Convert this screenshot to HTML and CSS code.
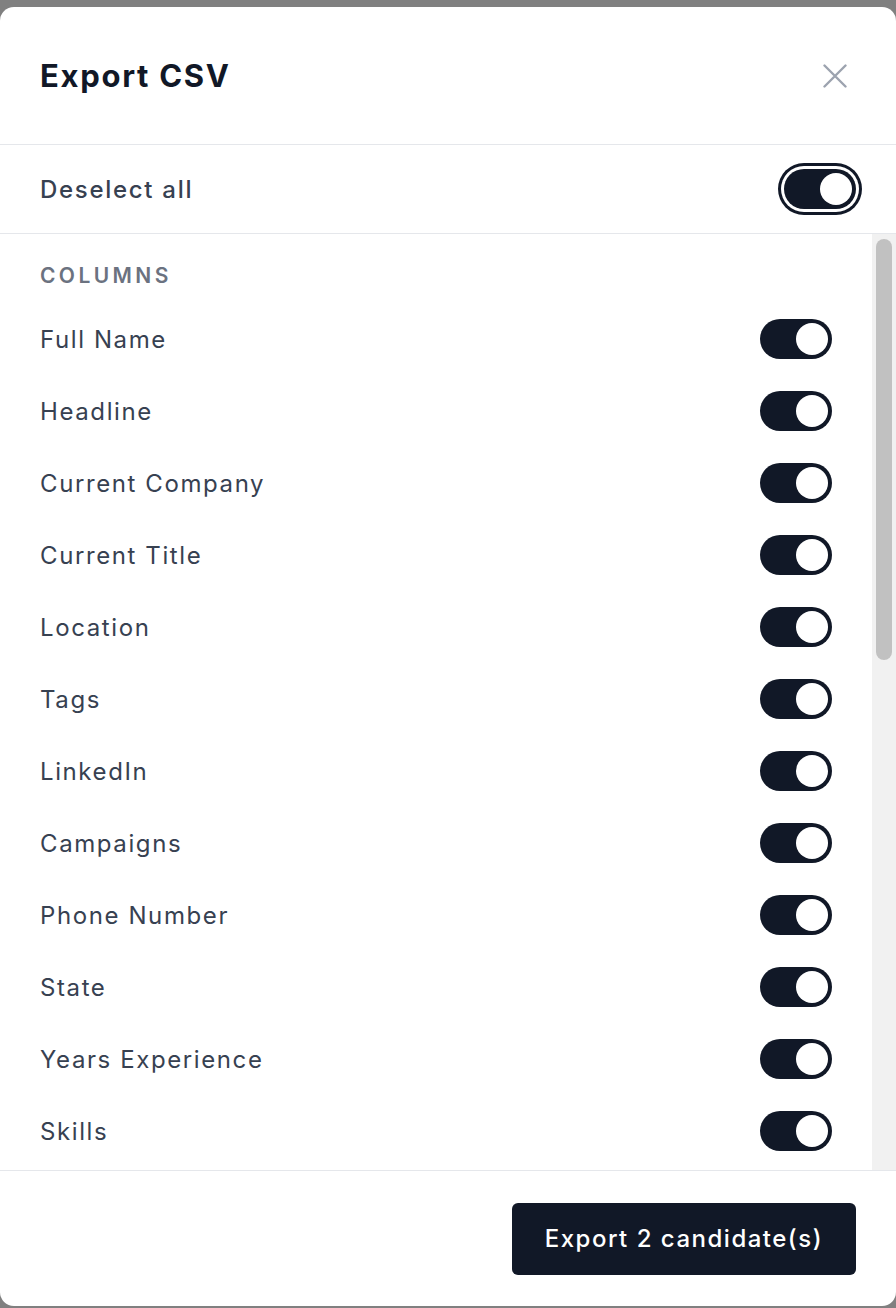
FILE: index.html
```html
<html>
<head>
    <meta charset="UTF-8">
    <title>Export CSV</title>
    <link rel="stylesheet" href="styles.css">
</head>
<body>
    <div class="modal">
        <div class="cabecera">
            <h1 class="titulo">Export CSV</h1>
            <button class="cerrar" type="button">
                <svg width="24" height="24" viewBox="0 0 24 24" fill="none" stroke="#9ca3af" stroke-width="2.4" stroke-linecap="round">
                    <path d="M1.5 1.5 L22.5 22.5 M22.5 1.5 L1.5 22.5"/>
                </svg>
            </button>
        </div>

        <div class="fila-todos">
            <span class="texto-todos">Deselect all</span>
            <span class="interruptor activo foco"><span class="bolita"></span></span>
        </div>

        <div class="zona">
            <div class="cuerpo">
                <p class="seccion">COLUMNS</p>
                <div class="fila"><span>Full Name</span><span class="interruptor activo"><span class="bolita"></span></span></div>
                <div class="fila"><span>Headline</span><span class="interruptor activo"><span class="bolita"></span></span></div>
                <div class="fila"><span>Current Company</span><span class="interruptor activo"><span class="bolita"></span></span></div>
                <div class="fila"><span>Current Title</span><span class="interruptor activo"><span class="bolita"></span></span></div>
                <div class="fila"><span>Location</span><span class="interruptor activo"><span class="bolita"></span></span></div>
                <div class="fila"><span>Tags</span><span class="interruptor activo"><span class="bolita"></span></span></div>
                <div class="fila"><span>LinkedIn</span><span class="interruptor activo"><span class="bolita"></span></span></div>
                <div class="fila"><span>Campaigns</span><span class="interruptor activo"><span class="bolita"></span></span></div>
                <div class="fila"><span>Phone Number</span><span class="interruptor activo"><span class="bolita"></span></span></div>
                <div class="fila"><span>State</span><span class="interruptor activo"><span class="bolita"></span></span></div>
                <div class="fila"><span>Years Experience</span><span class="interruptor activo"><span class="bolita"></span></span></div>
                <div class="fila"><span>Skills</span><span class="interruptor activo"><span class="bolita"></span></span></div>
            </div>
            <div class="barra">
                <div class="pulgar"></div>
            </div>
        </div>

        <div class="pie">
            <button class="exportar" type="button">Export 2 candidate(s)</button>
        </div>
    </div>
</body>
</html>
```

FILE: styles.css
```css
body {
    margin: 0;
    background-color: #808080;
    font-family: Inter, "Liberation Sans", sans-serif;
}

.modal {
    margin-top: 7px;
    height: 1299px;
    background-color: white;
    border-radius: 14px;
    display: flex;
    flex-direction: column;
    overflow: hidden;
}

.cabecera {
    height: 137px;
    flex-shrink: 0;
    display: flex;
    align-items: center;
    justify-content: space-between;
    padding: 0 49px 0 40px;
    border-bottom: 1px solid #e5e7eb;
}

.titulo {
    margin: 0;
    font-size: 31px;
    font-weight: 700;
    color: #111827;
    letter-spacing: 1.7px;
}

.cerrar {
    border: none;
    background: none;
    padding: 0;
    display: flex;
}

.fila-todos {
    height: 88px;
    flex-shrink: 0;
    display: flex;
    align-items: center;
    justify-content: space-between;
    padding: 0 40px;
    border-bottom: 1px solid #e5e7eb;
}

.texto-todos {
    font-size: 24px;
    font-weight: 500;
    color: #374151;
    letter-spacing: 1.7px;
}

.interruptor {
    position: relative;
    display: inline-block;
    width: 72px;
    height: 40px;
    border-radius: 20px;
    background-color: #e5e7eb;
    flex-shrink: 0;
}

.interruptor.activo { background-color: #111827; }

.interruptor.foco {
    box-shadow: 0 0 0 3px white, 0 0 0 6px #111827;
}

.bolita {
    position: absolute;
    top: 4px;
    left: 4px;
    width: 32px;
    height: 32px;
    border-radius: 50%;
    background-color: white;
}

.activo .bolita { left: 36px; }

.zona {
    flex: 1;
    display: flex;
    overflow: hidden;
}

.cuerpo {
    flex: 1;
    padding: 27px 40px 24px 40px;
}

.barra {
    width: 24px;
    flex-shrink: 0;
    background-color: #f1f1f1;
    padding: 5px 4px 0 4px;
    box-sizing: border-box;
}

.pulgar {
    height: 421px;
    border-radius: 8px;
    background-color: #c1c1c1;
}

.seccion {
    margin: 0 0 12px 0;
    font-size: 21px;
    line-height: 30px;
    font-weight: 600;
    letter-spacing: 3.4px;
    color: #6b7280;
}

.fila {
    height: 72px;
    display: flex;
    align-items: center;
    justify-content: space-between;
    font-size: 24px;
    color: #374151;
    letter-spacing: 1.6px;
}

.pie {
    height: 135px;
    flex-shrink: 0;
    display: flex;
    align-items: center;
    justify-content: flex-end;
    padding: 0 40px;
    border-top: 1px solid #e5e7eb;
}

.exportar {
    height: 72px;
    padding: 0 33px;
    border: none;
    border-radius: 6px;
    background-color: #111827;
    color: white;
    font-family: Inter, "Liberation Sans", sans-serif;
    font-size: 24px;
    font-weight: 500;
    letter-spacing: 1.5px;
}
```
